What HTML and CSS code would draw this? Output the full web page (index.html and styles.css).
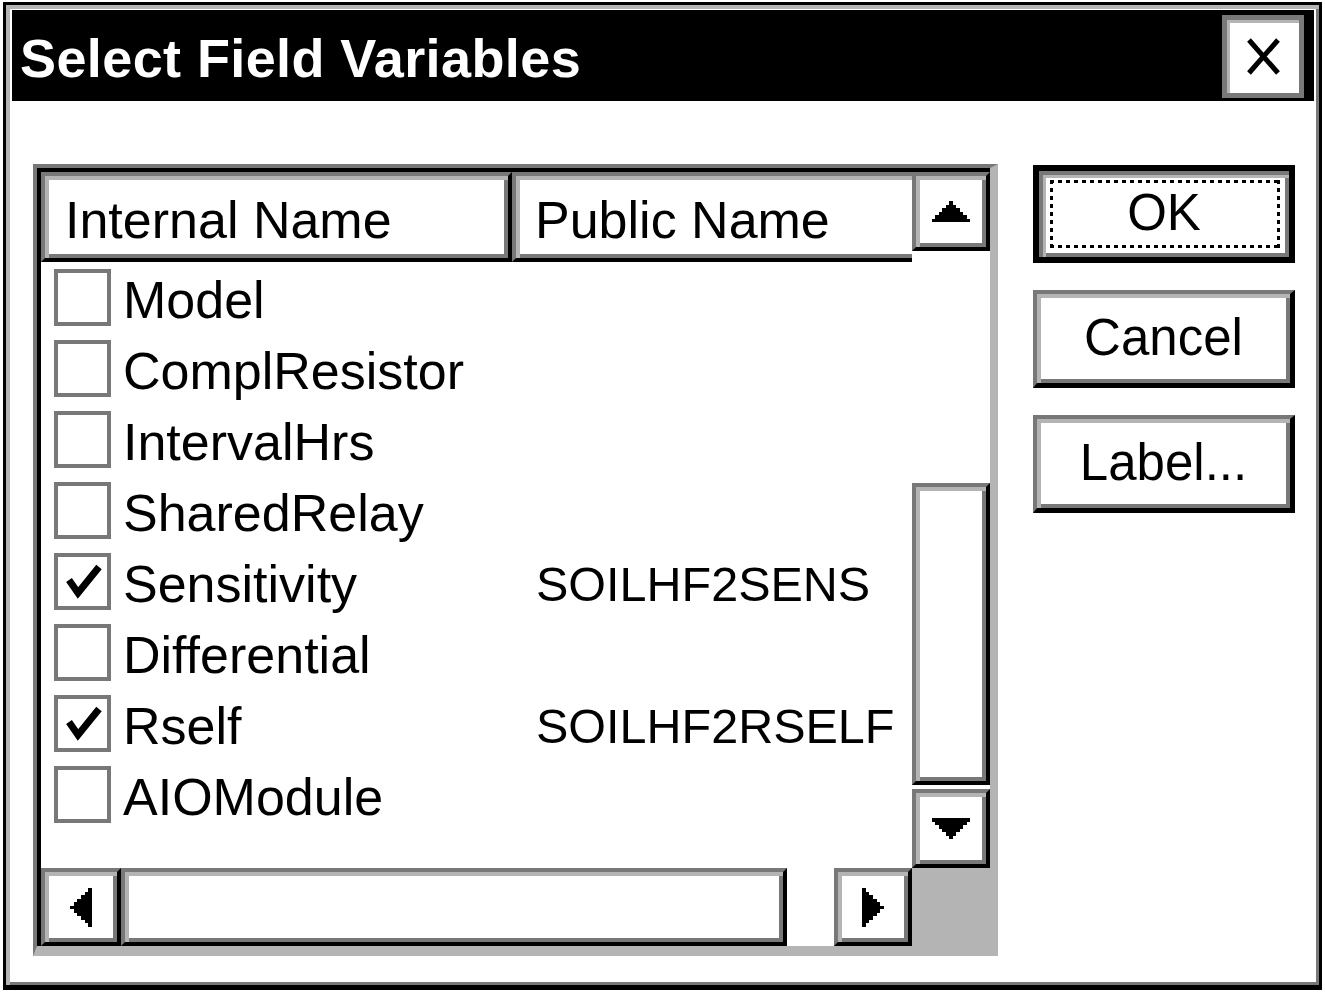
FILE: index.html
```html
<!DOCTYPE html>
<html>
<head>
<meta charset="utf-8">
<title>Select Field Variables</title>
<link rel="stylesheet" href="styles.css">
</head>
<body>
<div class="dialog">
  <div class="titlebar">
    <span class="title">Select Field Variables</span>
    <div class="close">
      <svg width="35" height="39" viewBox="0 0 35 39"><path d="M3 3 L32 36 M32 3 L3 36" stroke="#000" stroke-width="5" fill="none"/></svg>
    </div>
  </div>
  <div class="content">
    <div class="listview">
      <div class="lv-frame">
        <div class="lv-main">
          <div class="lv-header">
            <div class="hcell hcell-internal raised">Internal Name</div>
            <div class="hcell hcell-public raised">Public Name</div>
          </div>
          <div class="lv-rows">
            <div class="row"><div class="name"><span class="check"></span><span class="label">Model</span></div><span class="label value"></span></div>
            <div class="row"><div class="name"><span class="check"></span><span class="label">ComplResistor</span></div><span class="label value"></span></div>
            <div class="row"><div class="name"><span class="check"></span><span class="label">IntervalHrs</span></div><span class="label value"></span></div>
            <div class="row"><div class="name"><span class="check"></span><span class="label">SharedRelay</span></div><span class="label value"></span></div>
            <div class="row"><div class="name"><span class="check checked"><svg width="49" height="49" viewBox="0 0 49 49"><polyline points="11,23 20,36 41,10" stroke="#000" stroke-width="7" fill="none" stroke-linejoin="miter"/></svg></span><span class="label">Sensitivity</span></div><span class="label value">SOILHF2SENS</span></div>
            <div class="row"><div class="name"><span class="check"></span><span class="label">Differential</span></div><span class="label value"></span></div>
            <div class="row"><div class="name"><span class="check checked"><svg width="49" height="49" viewBox="0 0 49 49"><polyline points="11,23 20,36 41,10" stroke="#000" stroke-width="7" fill="none" stroke-linejoin="miter"/></svg></span><span class="label">Rself</span></div><span class="label value">SOILHF2RSELF</span></div>
            <div class="row"><div class="name"><span class="check"></span><span class="label">AIOModule</span></div><span class="label value"></span></div>
          </div>
        </div>
        <div class="vscroll">
          <div class="sb-btn sb-v raised">
            <svg width="38" height="21" viewBox="0 0 11 6" preserveAspectRatio="none" shape-rendering="crispEdges"><path d="M5 0H6V1H7V2H8V3H9V4H10V5H11V6H0V5H1V4H2V3H3V2H4V1H5Z" fill="#000"/></svg>
          </div>
          <div class="sb-track-v"></div>
          <div class="sb-thumb-v raised"></div>
          <div class="sb-gap-v"></div>
          <div class="sb-btn sb-v raised">
            <svg width="38" height="21" viewBox="0 0 11 6" preserveAspectRatio="none" shape-rendering="crispEdges"><path d="M0 0H11V1H10V2H9V3H8V4H7V5H6V6H5V5H4V4H3V3H2V2H1V1H0Z" fill="#000"/></svg>
          </div>
        </div>
        <div class="hscroll">
          <div class="sb-btn sb-left raised">
            <svg width="22" height="39" viewBox="0 0 6 11" preserveAspectRatio="none" shape-rendering="crispEdges"><path d="M0 5V6H1V7H2V8H3V9H4V10H5V11H6V0H5V1H4V2H3V3H2V4H1V5Z" fill="#000"/></svg>
          </div>
          <div class="sb-thumb-h raised"></div>
          <div class="sb-gap-h"></div>
          <div class="sb-btn sb-right raised">
            <svg width="22" height="39" viewBox="0 0 6 11" preserveAspectRatio="none" shape-rendering="crispEdges"><path d="M0 0H1V1H2V2H3V3H4V4H5V5H6V6H5V7H4V8H3V9H2V10H1V11H0Z" fill="#000"/></svg>
          </div>
        </div>
        <div class="corner"></div>
      </div>
    </div>
    <div class="buttons">
      <div class="btn btn-default"><span>OK</span></div>
      <div class="btn btn-normal"><span>Cancel</span></div>
      <div class="btn btn-normal"><span>Label...</span></div>
    </div>
  </div>
</div>
</body>
</html>
```

FILE: styles.css
```css
html, body {
  margin: 0;
  padding: 0;
  background: #fff;
}
body {
  width: 1325px;
  height: 992px;
  overflow: hidden;
  font-family: "Liberation Sans", Arial, sans-serif;
  color: #000;
}
.dialog {
  margin: 2px 3px 0 3px;
  height: 988px;
  box-sizing: border-box;
  border: 3px solid #000;
  border-bottom-width: 5px;
  box-shadow: inset 4px 4px 0 #b4b4b4, inset -3px -3px 0 #787878;
  padding: 5px 5px 0 6px;
  background: #fff;
}
.titlebar {
  height: 91px;
  background: #000;
  display: flex;
  justify-content: space-between;
  align-items: center;
  padding: 0 10px 0 8px;
  box-sizing: border-box;
}
.title {
  color: #fff;
  font-weight: bold;
  font-size: 54px;
  line-height: 1;
  padding-top: 5px;
  letter-spacing: 0.4px;
}
.close {
  align-self: flex-start;
  margin-top: 5px;
  width: 82px;
  height: 83px;
  box-sizing: border-box;
  border: 5px solid #787878;
  box-shadow: inset 3px 3px 0 #b4b4b4;
  background: #fff;
  display: flex;
  align-items: center;
  justify-content: center;
}
.close svg { display: block; }

.content {
  display: flex;
  align-items: flex-start;
  padding: 63px 0 0 21px;
}
.listview {
  width: 965px;
  height: 792px;
  box-sizing: border-box;
  border-style: solid;
  border-width: 4px 8px 10px 4px;
  border-color: #787878 #b4b4b4 #b4b4b4 #787878;
  flex: none;
}
.lv-frame {
  height: 100%;
  box-sizing: border-box;
  border-top: 4px solid #000;
  border-left: 4px solid #000;
  display: grid;
  grid-template-columns: 871px 78px;
  grid-template-rows: 696px 78px;
}
.raised {
  box-sizing: border-box;
  background: #fff;
  border-style: solid;
  border-width: 4px;
  border-color: #787878 #000 #000 #787878;
  box-shadow: inset 4px 4px 0 #b4b4b4, inset -4px -4px 0 #787878;
}
.lv-main {
  overflow: hidden;
  background: #fff;
}
.lv-header {
  display: flex;
  height: 90px;
}
.hcell {
  flex: none;
  height: 90px;
  display: flex;
  align-items: center;
  font-size: 52px;
  padding-top: 6px;
  white-space: nowrap;
}
.hcell-internal {
  width: 471px;
  padding-left: 20px;
}
.hcell-public {
  width: 480px;
  padding-left: 19px;
}
.row {
  display: grid;
  grid-template-columns: 495px auto;
  height: 71px;
  align-items: start;
}
.name {
  display: flex;
  align-items: flex-start;
  padding-left: 13px;
  gap: 12px;
}
.check {
  flex: none;
  width: 57px;
  height: 57px;
  margin-top: 7px;
  box-sizing: border-box;
  border: 4px solid #787878;
  background: #fff;
}
.check svg { display: block; }
.label {
  font-size: 52px;
  line-height: 71px;
  margin-top: 3px;
  white-space: nowrap;
}
.label.value {
  font-size: 48.5px;
}

.vscroll {
  display: flex;
  flex-direction: column;
}
.sb-btn {
  display: flex;
  align-items: center;
  justify-content: center;
}
.sb-btn svg { display: block; }
.sb-v { height: 79px; flex: none; }
.sb-track-v { height: 232px; flex: none; background: #fff; }
.sb-thumb-v { height: 302px; flex: none; }
.sb-gap-v { height: 4px; flex: none; background: #fff; }

.hscroll {
  display: flex;
}
.sb-left { width: 80px; flex: none; }
.sb-thumb-h { width: 666px; flex: none; }
.sb-gap-h { width: 47px; flex: none; background: #fff; }
.sb-right { width: 78px; flex: none; }
.corner { background: #b4b4b4; }

.buttons {
  margin-left: 35px;
  margin-top: 1px;
  width: 262px;
  display: flex;
  flex-direction: column;
  gap: 27px;
}
.btn {
  position: relative;
  height: 98px;
  box-sizing: border-box;
  background: #fff;
  display: flex;
  align-items: center;
  justify-content: center;
  font-size: 51px;
}
.btn span { margin-top: -3px; }
.btn-default {
  border: 6px solid #000;
  box-shadow: inset 4px 4px 0 #787878, inset 7px 7px 0 #b4b4b4, inset -4px -4px 0 #787878;
}
.btn-default::after {
  content: "";
  position: absolute;
  left: 11px;
  right: 9px;
  top: 9px;
  bottom: 9px;
  background:
    repeating-linear-gradient(90deg, #000 0 4px, transparent 4px 8px) top / 100% 3px no-repeat,
    repeating-linear-gradient(90deg, #000 0 4px, transparent 4px 8px) bottom / 100% 3px no-repeat,
    repeating-linear-gradient(180deg, #000 0 4px, transparent 4px 8px) left / 3px 100% no-repeat,
    repeating-linear-gradient(180deg, #000 0 4px, transparent 4px 8px) right / 3px 100% no-repeat;
}
.btn-normal {
  border-style: solid;
  border-width: 4px 5px 5px 4px;
  border-color: #787878 #000 #000 #787878;
  box-shadow: inset 4px 4px 0 #b4b4b4, inset -4px -4px 0 #787878;
}
```
